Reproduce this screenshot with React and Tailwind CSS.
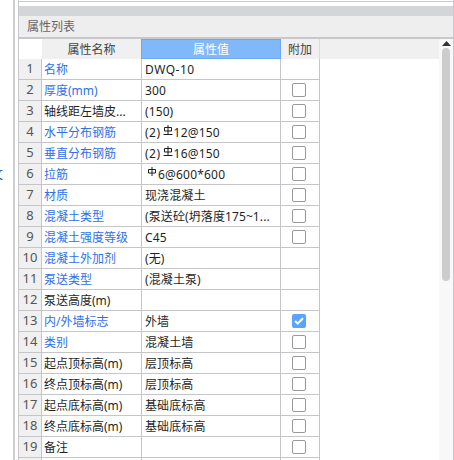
const rows = [
  { n: "名称", v: "DWQ-10", blue: 1, c: 0, wide: 1 },
  { n: "厚度(mm)", v: "300", blue: 1, c: 1 },
  { n: "轴线距左墙皮...", v: "(150)", blue: 0, c: 1 },
  { n: "水平分布钢筋", v: ["(2)", "bar", "12@150"], blue: 1, c: 1 },
  { n: "垂直分布钢筋", v: ["(2)", "bar", "16@150"], blue: 1, c: 1 },
  { n: "拉筋", v: ["", "tie", "6@600*600"], blue: 1, c: 1 },
  { n: "材质", v: "现浇混凝土", blue: 1, c: 1 },
  { n: "混凝土类型", v: "(泵送砼(坍落度175~1...", blue: 1, c: 1 },
  { n: "混凝土强度等级", v: "C45", blue: 1, c: 1 },
  { n: "混凝土外加剂", v: "(无)", blue: 1, c: 0 },
  { n: "泵送类型", v: "(混凝土泵)", blue: 1, c: 0 },
  { n: "泵送高度(m)", v: "", blue: 0, c: 0 },
  { n: "内/外墙标志", v: "外墙", blue: 1, c: 2 },
  { n: "类别", v: "混凝土墙", blue: 1, c: 1 },
  { n: "起点顶标高(m)", v: "层顶标高", blue: 0, c: 1 },
  { n: "终点顶标高(m)", v: "层顶标高", blue: 0, c: 1 },
  { n: "起点底标高(m)", v: "基础底标高", blue: 0, c: 1 },
  { n: "终点底标高(m)", v: "基础底标高", blue: 0, c: 1 },
  { n: "备注", v: "", blue: 0, c: 1 },
];

function Steel({ bar }) {
  return (
    <svg width="10" height="10" viewBox="0 0 10 10" className="mb-[5px] ml-[2px] mr-[1px] shrink-0" fill="none" stroke="#1f1f1f" strokeWidth="1">
      <path d="M1.5 2.5H8.5V6H1.5Z" />
      <path d="M5 0V9" />
      {bar && <path d="M0.5 9.5H9.5" />}
    </svg>
  );
}

function Value({ v, wide }) {
  if (typeof v === "string")
    return <span className={wide ? "truncate tracking-[0.5px]" : "truncate tracking-[0.1px]"}>{v}</span>;
  return (
    <span className="flex items-center">
      {v[0] && <span className="tracking-[0.5px]">{v[0]}</span>}
      <Steel bar={v[1] === "bar"} />
      <span className="tracking-[0.2px]">{v[2]}</span>
    </span>
  );
}

function Check({ state }) {
  if (state === 0) return null;
  if (state === 2)
    return (
      <span className="flex h-[14px] w-[14px] items-center justify-center rounded-[2px] bg-[#5aa5fb]">
        <svg width="10" height="8" viewBox="0 0 10 8" fill="none" stroke="#fff" strokeWidth="2">
          <path d="M1 4L3.8 6.5L9 1.2" />
        </svg>
      </span>
    );
  return <span className="h-[14px] w-[14px] rounded-[2px] border border-[#999999]" />;
}

export default function App() {
  return (
    <div className="flex h-[460px] w-[454px] overflow-hidden bg-white font-['Noto_Sans','Noto_Sans_CJK_SC',sans-serif] text-[12px] text-[#1f1f1f]">
      <div className="w-[13px] shrink-0 pt-[166px]">
        <div className="w-[3px] overflow-hidden">
          <div className="-ml-[9px] w-[12px] leading-[18px] text-[#1a3f80]">文</div>
        </div>
      </div>
      <div className="w-[5px] shrink-0 border-l-2 border-[#cfcfd3]" />
      <div className="flex min-w-0 flex-1 flex-col border-x border-[#c8c8cc]">
        <div className="mt-[1px] h-[5px] shrink-0 border-t border-[#c8c8cc]" />
        <div className="h-[10px] shrink-0 bg-[#d4d5d9]" />
        <div className="flex h-[21px] shrink-0 items-center bg-[#eeeeee] pl-[8px] pt-[1px] text-[#666666]">属性列表</div>
        <div className="h-[2px] shrink-0 bg-[#c8c8cc]" />
        <div className="flex min-h-0 flex-1">
          <div className="min-w-0 flex-1">
            <div className="flex h-[20px] bg-[#f0f0f0]">
              <div className="w-[23px] shrink-0 bg-white" />
              <div className="flex w-[99px] shrink-0 items-center justify-center pt-[1px] text-[#444444]">属性名称</div>
              <div className="flex w-[140px] shrink-0 items-center justify-center border border-[#6ca9ee] bg-[#80b8fa] pt-[1px] text-white">属性值</div>
              <div className="flex w-[39px] shrink-0 items-center justify-center border-r border-[#dcdce0] pt-[1px] text-[#444444]">附加</div>
            </div>
            {[...rows, null].map((r, i) => (
              <div key={i} className="flex h-[21px] w-[301px] border-b border-[#c5c5ca]">
                <div className="flex w-[23px] shrink-0 items-center justify-center border-r border-[#c5c5ca] bg-[#f0f0f0] text-[13px] text-[#555555]">{i + 1 < 20 ? i + 1 : ""}</div>
                <div className={`flex w-[100px] shrink-0 items-center border-r border-[#c5c5ca] pl-[2px] pt-[1px] ${r && r.blue ? "text-[#2f6fed]" : ""}`}>{r ? r.n : ""}</div>
                <div className="flex w-[139px] shrink-0 items-center overflow-hidden whitespace-nowrap border-r border-[#c5c5ca] pl-[3px] pt-[1px]">{r && <Value v={r.v} wide={r.wide} />}</div>
                <div className="flex w-[39px] shrink-0 items-center justify-center border-r border-[#c5c5ca] pr-[3px]">{r && <Check state={r.c} />}</div>
              </div>
            ))}
          </div>
          <div className="flex w-[14px] shrink-0 flex-col items-center bg-[#f8f8f8] pt-[2px]">
            <svg width="9" height="5" viewBox="0 0 9 5" fill="#333333"><path d="M4.5 0L9 5H0Z" /></svg>
            <div className="mt-[2px] h-[233px] w-[8px] rounded-[4px] bg-[#cccccc]" />
          </div>
        </div>
      </div>
    </div>
  );
}
